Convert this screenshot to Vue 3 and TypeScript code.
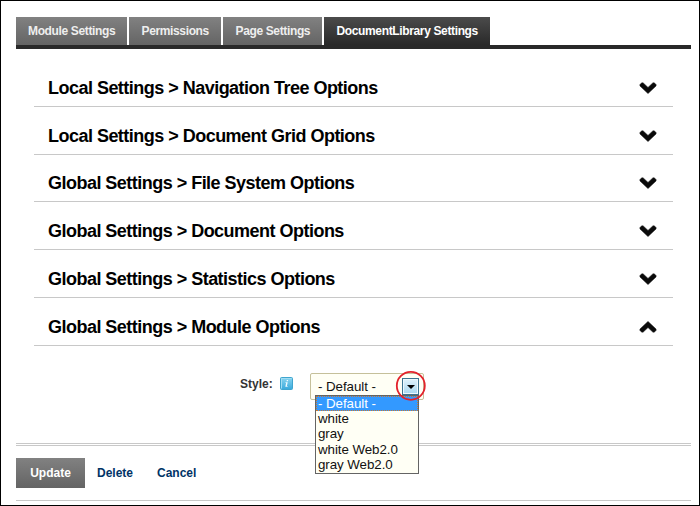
<script setup lang="ts">
const tabs: { label: string; cls: string }[] = [
  { label: 'Module Settings', cls: 'module' },
  { label: 'Permissions', cls: 'permissions' },
  { label: 'Page Settings', cls: 'page-settings' },
  { label: 'DocumentLibrary Settings', cls: 'library' },
]
const sections: { title: string; open?: boolean }[] = [
  { title: 'Local Settings > Navigation Tree Options' },
  { title: 'Local Settings > Document Grid Options' },
  { title: 'Global Settings > File System Options' },
  { title: 'Global Settings > Document Options' },
  { title: 'Global Settings > Statistics Options' },
  { title: 'Global Settings > Module Options', open: true },
]
const options: string[] = ['- Default -', 'white', 'gray', 'white Web2.0', 'gray Web2.0']
const selected = options[0]
</script>

<template>
  <div class="frame">
    <nav class="tabs">
      <a v-for="t in tabs" :key="t.label" class="tab" :class="t.cls">{{ t.label }}</a>
    </nav>
    <main class="sections">
      <h2 v-for="s in sections" :key="s.title" class="section">
        <span>{{ s.title }}</span>
        <svg class="chevron" :class="{ up: s.open }" width="18" height="12" viewBox="0 0 18 12">
          <path d="M.8 2.8 L2.8 .7 L4.2 .9 L9 5.4 L13.8 .9 L15.2 .7 L17.2 2.8 L17 4 L9 11.6 L1 4 Z" fill="#0a0a0a" stroke="#0a0a0a" stroke-width=".5" stroke-linejoin="round" />
        </svg>
      </h2>
      <div class="field">
        <label class="label">Style:</label>
        <svg class="info" width="13" height="13" viewBox="0 0 13 13">
          <defs>
            <linearGradient id="info-fill" x1="0" y1="0" x2="0" y2="1">
              <stop offset="0" stop-color="#8bd5f0" />
              <stop offset="1" stop-color="#38a9dc" />
            </linearGradient>
          </defs>
          <rect x=".5" y=".5" width="12" height="12" rx="1" fill="url(#info-fill)" stroke="#3fa5cf" />
          <path d="M1.5 11.5V1.5H11.5" fill="none" stroke="#a2def3" />
          <path d="M6.8 3h1.4l-.3 1.2H6.5z M5.6 5.2h2.1L6.9 8.9h.8l-.2.8H5.3L6.1 6H5.4z" fill="#f2fbff" />
        </svg>
        <div class="select">
          <span class="value">{{ selected }}</span>
          <span class="drop">
            <svg width="8" height="4" viewBox="0 0 8 4"><path d="M0 0H8L4 4Z" fill="#000" /></svg>
          </span>
          <ul class="menu">
            <li v-for="o in options" :key="o" class="option" :class="{ active: o === selected }">{{ o }}</li>
          </ul>
          <svg class="ring" width="32" height="32" viewBox="0 0 32 32">
            <circle cx="15.8" cy="15.8" r="14" fill="none" stroke="#e3222b" stroke-width="1.8" />
          </svg>
        </div>
      </div>
    </main>
    <footer class="actions">
      <button class="update">Update</button>
      <a class="link delete">Delete</a>
      <a class="link">Cancel</a>
    </footer>
  </div>
</template>

<style>
body { margin: 0; background: #fff; }
</style>

<style scoped>
.frame {
  box-sizing: border-box;
  width: 700px;
  height: 506px;
  border: 1px solid #000;
  padding: 16px 8px 0 15px;
  background: #fff;
  font-family: "Liberation Sans", Arial, sans-serif;
  overflow: hidden;
}
.tabs {
  display: flex;
  gap: 2px;
  height: 28px;
  border-bottom: 4px solid #292929;
}
.tab {
  box-sizing: border-box;
  padding-left: 12.5px;
  background: linear-gradient(#818181, #646464);
  color: #eee;
  font-size: 12px;
  font-weight: 700;
  line-height: 28px;
  letter-spacing: -0.36px;
  white-space: nowrap;
}
.module { width: 111px; padding-left: 12px; }
.permissions { width: 92px; }
.page-settings { width: 99px; }
.library { width: 166px; background: linear-gradient(#4b4b4b, #292929); color: #fff; }
.sections {
  box-sizing: border-box;
  height: 394px;
  padding: 10px 18px 0;
}
.section {
  box-sizing: border-box;
  display: flex;
  justify-content: space-between;
  height: 48px;
  margin: 0;
  padding: 17px 16px 0 14px;
  border-bottom: 1px solid #c8c8c8;
  color: #000;
  font-size: 18px;
  font-weight: 700;
  line-height: 24px;
  letter-spacing: -0.52px;
  white-space: nowrap;
}
.section:nth-child(3) { height: 47px; padding-top: 16px; }
.chevron { margin-top: 6px; }
.chevron.up { transform: scaleY(-1); }
.field {
  display: flex;
  align-items: flex-start;
  padding: 27px 0 0 206px;
}
.label {
  width: 40px;
  padding-top: 3px;
  color: #333;
  font-size: 12px;
  font-weight: 700;
  line-height: 16px;
}
.info { margin-top: 4px; }
.select {
  position: relative;
  box-sizing: border-box;
  display: flex;
  width: 114px;
  height: 27px;
  margin-left: 17px;
  padding: 4px 4px 0 7px;
  border: 1px solid #c5c09a;
  border-radius: 2px;
  background: #fffff5;
  color: #111;
  font-size: 13.333px;
}
.value { width: 84px; line-height: 18px; letter-spacing: -0.06px; }
.drop {
  box-sizing: border-box;
  flex: none;
  display: flex;
  align-items: center;
  justify-content: center;
  width: 17px;
  height: 17px;
  border: 1px solid #3c7390;
  box-shadow: inset 0 0 0 1px #edf8fd;
  background: linear-gradient(#e0f2fb, #a9d8ef);
}
.menu {
  position: absolute;
  top: 21px;
  left: 4px;
  box-sizing: border-box;
  width: 104px;
  height: 79px;
  margin: 0;
  padding: 0;
  border: 1px solid #646464;
  background: #fffff5;
  list-style: none;
}
.option {
  box-sizing: border-box;
  height: 15.35px;
  padding-left: 2px;
  line-height: 16px;
  letter-spacing: -0.06px;
  white-space: nowrap;
}
.option.active {
  height: 15px;
  padding-left: 1px;
  border: 1px dotted #c87832;
  background: #3399ff;
  color: #fff;
  line-height: 14px;
}
.ring { position: absolute; left: 84px; top: -4px; }
.actions {
  box-sizing: border-box;
  display: flex;
  height: 58px;
  padding-top: 12px;
  border-top: 3px double #c8c8c8;
  border-bottom: 1px solid #c8c8c8;
}
.update {
  width: 69px;
  height: 30px;
  margin: 0;
  padding: 0;
  border: 0;
  background: linear-gradient(#818181, #646464);
  color: #fff;
  font: 700 12px/30px "Liberation Sans", Arial, sans-serif;
}
.link {
  margin-left: 12px;
  color: #003366;
  font-size: 12px;
  font-weight: 700;
  line-height: 30px;
}
.delete { width: 48px; }
</style>
